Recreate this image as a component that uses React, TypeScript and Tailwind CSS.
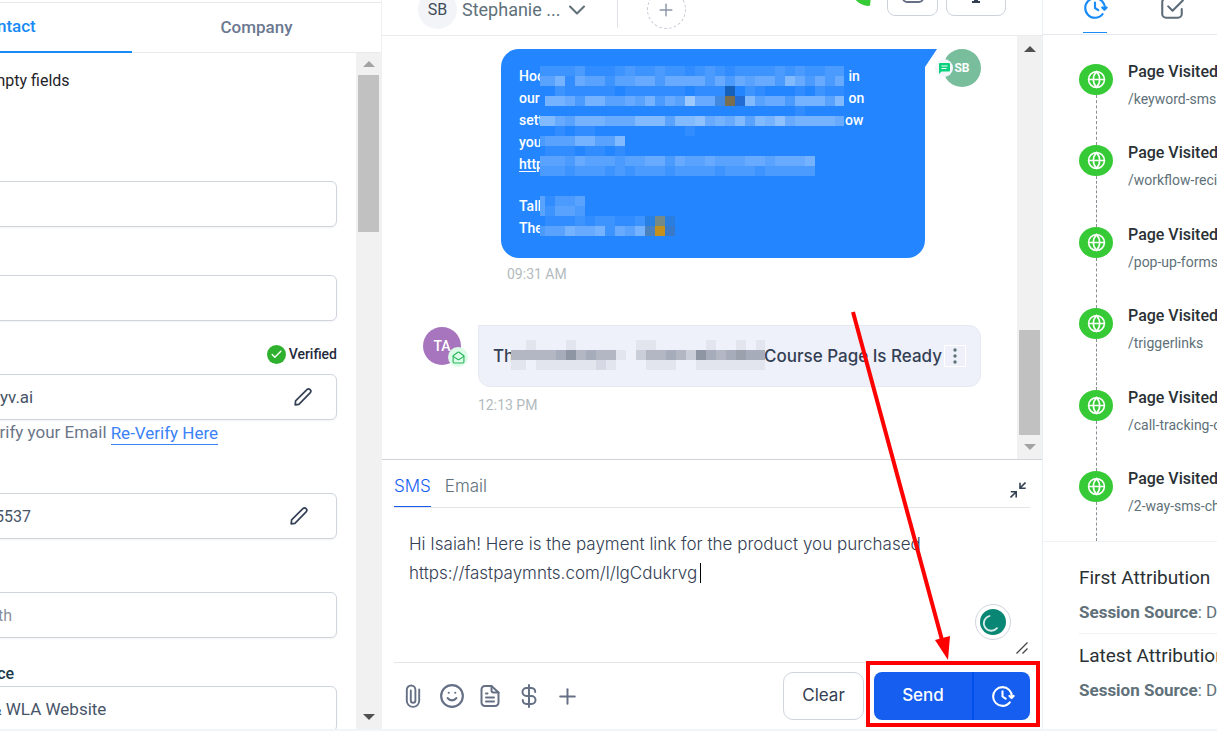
import { ReactNode } from "react";
import { Check, ChevronDown, Globe, MailOpen, Plus, Smile } from "lucide-react";

type Block = { x: number; y: number; row: string };

const TINTS: Record<string, string> = {
  A: "#1560b8",
  B: "#4088e0",
  C: "#7a6e50",
  D: "#226cd4",
  E: "#2880e4",
  F: "#748a88",
  G: "#2b7ede",
  H: "#4a82bf",
  I: "#c4901e",
  J: "#3a78c8",
};

const MESSAGE_BLOCKS: Block[] = [
  { x: 0, y: 0, row: "2222311123223221232122223232233" },
  { x: 0, y: 10, row: "4461544244553555535354553753535" },
  { x: 0, y: 20, row: "0021111101111110111A02100010211" },
  { x: 5, y: 30, row: "66536644546354955BCD7455366647" },
  { x: 0, y: 40, row: "0000000000000000000000000010000" },
  { x: 0, y: 50, row: "7754666555777477856574768566665" },
  { x: 0, y: 60, row: "00101100000000010000000" },
  { x: 0, y: 70, row: "344466447" },
  { x: 0, y: 80, row: "011101101" },
  { x: 0, y: 90, row: "4443544434455354454445545556" },
  { x: 0, y: 100, row: "3332333232333233332333233333" },
  { x: 0, y: 130, row: "41334" },
  { x: 0, y: 140, row: "42443" },
  { x: 0, y: 150, row: "01112122112EFG" },
  { x: 0, y: 160, row: "34465562546HIJ" },
];

const SUBJECT_BLOCKS: Block[] = [
  { x: 0, y: 0, row: "00100010000" },
  { x: 0, y: 10, row: "555556856551" },
  { x: 0, y: 20, row: "110111111210" },
  { x: 125, y: 0, row: "1100000100101" },
  { x: 125, y: 10, row: "3556538656766" },
  { x: 125, y: 20, row: "0111001111111" },
];

function Mosaic({ blocks, base, tone, step, className, w, h }: {
  blocks: Block[]; base: string; tone: string; step: number; className: string; w: number; h: number;
}) {
  return (
    <svg aria-hidden="true" width={w} height={h} viewBox={`0 0 ${w} ${h}`} shapeRendering="crispEdges" className={className}>
      {blocks.map((b, r) =>
        b.row.split("").map((c, i) => {
          const half = b.x === 0;
          const x = half ? (i === 0 ? 0 : 5 + (i - 1) * 10) : b.x + i * 10;
          const width = half && i === 0 ? 5 : 10;
          const tint = TINTS[c];
          return (
            <g key={`${r}-${i}`}>
              <rect x={x} y={b.y} width={width} height={10} fill={tint ?? base} />
              {!tint && <rect x={x} y={b.y} width={width} height={10} fill={tone} opacity={Number(c) * step} />}
            </g>
          );
        })
      )}
    </svg>
  );
}

function Arrow({ down, dark }: { down?: boolean; dark?: boolean }) {
  return (
    <svg width="12" height="6" viewBox="0 0 12 6" aria-hidden="true">
      <path d={down ? "M0 0h12L6 6z" : "M0 6h12L6 0z"} fill={dark ? "#505050" : "#a3a3a3"} />
    </svg>
  );
}

function Scrollbar({ atEnd, className }: { atEnd?: boolean; className: string }) {
  return (
    <div aria-hidden="true" className="flex w-[25px] shrink-0 flex-col items-center bg-[#f1f1f1]">
      <div className={atEnd ? "flex h-[22px] items-center pt-1" : "flex h-[22px] items-center"}><Arrow dark={atEnd} /></div>
      {atEnd && <div className="flex-1" />}
      <div className={className} />
      {!atEnd && <div className="flex-1" />}
      <div className="flex h-6 items-center"><Arrow down dark={!atEnd} /></div>
    </div>
  );
}

function Pencil() {
  return (
    <svg width="18" height="18" viewBox="0 0 18 18" fill="none" stroke="#344054" strokeWidth="1.7" strokeLinejoin="round" aria-hidden="true">
      <path d="M1.2 16.8l.4-4L12.9 1.7a2.2 2.2 0 0 1 3.2 3.2L4.9 16.3z" />
    </svg>
  );
}

function ClockForward({ size }: { size: number }) {
  return (
    <svg width={size} height={size} viewBox="0 0 24 24" fill="none" stroke="currentColor" strokeWidth="2" strokeLinecap="round" strokeLinejoin="round" aria-hidden="true">
      <path d="M22.7 11.5L20.7 13.5L18.7 11.5M20.95 13C20.98 12.67 21 12.34 21 12C21 7.03 16.97 3 12 3C7.03 3 3 7.03 3 12C3 16.97 7.03 21 12 21C14.83 21 17.35 19.69 19 17.65M12 7V12L15 14" />
    </svg>
  );
}

function Field({ label, children, value, placeholder, className = "text-base" }: {
  label: string; children?: ReactNode; value?: string; placeholder?: string; className?: string;
}) {
  return (
    <div className={`flex h-[46px] shrink-0 items-center rounded-md border border-[#cfd4de] bg-white shadow-xs ${className}`}>
      <input
        aria-label={label}
        defaultValue={value}
        placeholder={placeholder}
        className="h-full min-w-0 flex-1 bg-transparent text-[#475467] outline-none placeholder:text-[#8a90a0]"
      />
      {children}
    </div>
  );
}

function ContactPanel() {
  return (
    <aside className="-ml-[120px] flex w-[502px] shrink-0 flex-col border-r border-[#f0f1f3] pt-0.5">
      <div className="flex h-[51px] shrink-0 border-y border-[#e8eaee] text-[17px] font-medium">
        <button className="-mb-px w-[252px] border-b-2 border-[#188bf6] text-[#188bf6]">Contact</button>
        <button className="flex-1 text-[#6b7890]">Company</button>
      </div>
      <div className="flex min-h-0 flex-1">
        <div className="flex min-w-0 flex-1 flex-col overflow-hidden pt-4 pr-[19px] pl-6">
          <label className="flex h-6 shrink-0 items-center gap-[30px] text-base text-[#1f2329]">
            <input type="checkbox" className="size-3" />
            Hide empty fields
          </label>
          <Field label="First name" className="mt-[88px] px-4" />
          <Field label="Last name" className="mt-12 px-4" />
          <div className="mt-[21px] mb-2 flex h-6 shrink-0 items-center justify-end gap-[3px] text-sm font-medium text-[#1f2a3d]">
            <span className="flex size-[19px] items-center justify-center rounded-full bg-[#2fb12f] text-white">
              <Check size={13} strokeWidth={2.5} />
            </span>
            Verified
          </div>
          <Field label="Email" value="yv.ai" className="pr-6 pl-[95px] text-[17px]">
            <button aria-label="Edit email"><Pencil /></button>
          </Field>
          <div className="flex h-[26px] shrink-0 items-center gap-1 pl-[18px] text-[17px] whitespace-nowrap text-[#6b7688]">
            <span>Click to verify your Email</span>
            <a href="#verify" className="border-b border-[#3b82f6] leading-[22px] text-[#3b82f6]">Re-Verify Here</a>
          </div>
          <Field label="Phone" value="5537" className="mt-[47px] pr-7 pl-[90px] text-base">
            <button aria-label="Edit phone"><Pencil /></button>
          </Field>
          <Field label="Date of birth" placeholder="Date Of Birth" className="mt-[53px] px-4" />
          <div className="mt-6 flex h-6 shrink-0 items-center text-base font-medium text-[#1b3a4b]">Contact Source</div>
          <Field label="Contact source" value="& WLA Website" className="pr-4 pl-[86px] text-[17px]" />
        </div>
        <Scrollbar className="h-[157px] w-[21px] bg-[#c1c1c1]" />
      </div>
    </aside>
  );
}

function ConversationHeader() {
  return (
    <header className="-mt-[37px] flex h-[73px] shrink-0 items-end border-b border-[#e9ebee] pl-9 pr-9">
      <div className="mb-1.5 flex items-center">
        <span className="flex size-[39px] items-center justify-center rounded-full bg-[#f2f4f8] text-base text-[#3f4b58]">SB</span>
        <span className="ml-[5px] flex items-center gap-0.5 text-lg text-[#607179]">
          Stephanie ...
          <ChevronDown size={28} strokeWidth={1.8} />
        </span>
        <span className="ml-[26px] h-9 w-px bg-[#dfe2e6]" />
        <button aria-label="Add" className="ml-[29px] flex size-[39px] items-center justify-center rounded-full border border-dashed border-[#c4c9d4] text-[#8a94a8]">
          <Plus size={20} strokeWidth={1.7} />
        </button>
      </div>
      <div className="mb-[19px] ml-auto flex items-end gap-2">
        <svg width="20" height="30" viewBox="0 0 20 30" className="mr-1.5" aria-hidden="true">
          <path d="M0 10C2 14 6 18 12 19.6 14 20 16 20 17 19.5L18 10z" fill="#37ca37" />
        </svg>
        <button aria-label="Archive" className="flex h-10 w-[51px] items-end justify-center rounded-lg border border-[#cdd2dc] pb-3">
          <svg width="22" height="16" viewBox="0 0 22 16" fill="none" stroke="#667085" strokeWidth="2" aria-hidden="true">
            <rect x="1" y="-6" width="20" height="21" rx="4" />
          </svg>
        </button>
        <button aria-label="Details" className="flex h-10 w-[60px] items-end justify-center rounded-lg border border-[#cdd2dc] pb-3">
          <svg width="8" height="12" viewBox="0 0 8 12" aria-hidden="true"><path d="M2 0h4v10h2v2H0v-2h2z" fill="#344054" /></svg>
        </button>
      </div>
    </header>
  );
}

const LINES: [string, string][] = [["Hoo", " in"], ["our", " on"], ["sett", "ow"], ["you", ""]];

function Messages() {
  return (
    <div className="flex min-h-0 flex-1">
      <div className="min-w-0 flex-1 overflow-hidden pt-[13px] pr-9 pl-[41px]">
        <div className="flex justify-end gap-[18px]">
          <div className="relative h-[209px] w-[424px] rounded-[18px] rounded-tr-none bg-[#2385ff] px-[18px] pt-4 text-sm leading-[22px] font-medium text-white">
            {LINES.map(([start, end]) => (
              <p key={start} className="flex whitespace-pre">
                <span className="w-[326px]">{start}</span>
                <span>{end}</span>
              </p>
            ))}
            <p><a href="#link" className="underline underline-offset-2">http</a></p>
            <p className="mt-5">Talk</p>
            <p>The</p>
            <Mosaic blocks={MESSAGE_BLOCKS} base="#2385ff" tone="#ffffff" step={0.062} w={304} h={170} className="absolute top-[17px] left-[39px]" />
            <svg width="12" height="18" viewBox="0 0 12 18" className="absolute top-0 left-full" aria-hidden="true"><path d="M0 0h12L0 18z" fill="#2385ff" /></svg>
          </div>
          <div className="relative flex size-[38px] items-center justify-center rounded-full bg-[#78bd9c] text-xs font-bold text-white">
            SB
            <span className="absolute top-2.5 -left-2 flex size-[18px] items-center justify-center rounded-full bg-[#f4f6fa]">
              <svg width="11" height="11" viewBox="0 0 11 11" aria-hidden="true">
                <path d="M1 0h9q1 0 1 1v6.500q0 1-1 1H2.500L0 11V1q0-1 1-1z" fill="#0bd07c" />
                <path d="M2.500 3h6M2.500 5.500h5" stroke="#fff" strokeWidth="1" />
              </svg>
            </span>
          </div>
        </div>
        <p className="mt-1.5 pl-[84px] text-sm text-[#b2babd]">09:31 AM</p>
        <div className="mt-[41px] flex items-start gap-[17px]">
          <div className="relative mt-0.5 flex size-[38px] shrink-0 items-center justify-center rounded-full bg-[#a675be] text-sm font-medium text-white">
            TA
            <span className="absolute top-5 left-[25px] flex size-5 items-center justify-center rounded-full bg-[#dcfce7] text-[#27b35c]">
              <MailOpen size={13} strokeWidth={2} />
            </span>
          </div>
          <div className="min-w-0 flex-1">
            <div className="relative flex h-[62px] items-center justify-between rounded-xl rounded-tl-none border border-[#e6e9ef] bg-[#eef1fa] pr-3.5 pl-3.5 font-['Inter',sans-serif] text-[17px] leading-6 font-medium text-[#344054]">
              <span>Th</span>
              <Mosaic blocks={SUBJECT_BLOCKS} base="#eef1fa" tone="#364152" step={0.065} w={254} h={30} className="absolute top-3.5 left-8" />
              <span className="flex items-center gap-0.5 whitespace-nowrap">
                Course Page Is Ready
                <button aria-label="More actions" className="flex size-[22px] items-center justify-center border border-white">
                  <svg width="4" height="16" viewBox="0 0 4 16" fill="#607179" aria-hidden="true"><circle cx="2" cy="2" r="1.700" /><circle cx="2" cy="8" r="1.700" /><circle cx="2" cy="14" r="1.700" /></svg>
                </button>
              </span>
            </div>
            <p className="mt-2 text-sm text-[#b2babd]">12:13 PM</p>
          </div>
        </div>
      </div>
      <Scrollbar atEnd className="h-[105px] w-[21px] bg-[#c1c1c1]" />
    </div>
  );
}

function Composer() {
  return (
    <section className="flex h-[270px] shrink-0 flex-col border-t border-[#d0d3d8] pr-3 pl-3 font-['Inter',sans-serif] text-[17px]">
      <div className="flex h-12 shrink-0 items-end justify-between border-b border-[#e2e4e8]">
        <div className="flex gap-3.5 font-light">
          <button className="h-10 border-b border-[#155eef] text-[#155eef]">SMS</button>
          <button className="h-10 text-[#607179]">Email</button>
        </div>
        <button aria-label="Collapse" className="mb-[9px] pr-1">
          <svg width="16" height="16" viewBox="0 0 16 16" fill="none" stroke="#344054" strokeWidth="1.600" aria-hidden="true">
            <path d="M15.500.500L10 6M10 .800V6.200h5.700M.500 15.500L6 10M.800 9.800h5.400v5.700" />
          </svg>
        </button>
      </div>
      <div className="relative flex min-h-0 flex-1 border-b border-[#e2e4e8]">
        <textarea
          aria-label="Message"
          defaultValue={"Hi Isaiah! Here is the payment link for the product you purchased\nhttps://fastpaymnts.com/l/lgCdukrvg"}
          className="w-full flex-1 resize-none bg-transparent px-[15px] pt-[22px] leading-[29px] font-light text-[#344054] outline-none"
        />
        <span className="absolute top-[55px] left-[306px] h-5 w-px bg-black" />
        <span className="absolute right-[19px] bottom-[22px] flex size-9 items-center justify-center rounded-full border border-[#cfd4de] bg-white">
          <svg width="26" height="26" viewBox="0 0 26 26" fill="none" aria-hidden="true">
            <circle cx="13" cy="13" r="13" fill="#0a8674" />
            <path d="M9.500 7a7.500 7.500 0 1 0 7.500 12.200" stroke="#d5eeea" strokeWidth="1.800" strokeLinecap="round" />
          </svg>
        </span>
        <svg width="12" height="12" viewBox="0 0 12 12" className="absolute right-0.5 bottom-2" stroke="#444" strokeWidth="1.300" aria-hidden="true">
          <path d="M.5 11.500l11-11M6.500 11.500l5-5" />
        </svg>
      </div>
      <div className="flex h-[66px] shrink-0 items-center justify-between">
        <div className="flex items-center pl-2 text-[#667085]">
          <button aria-label="Attach file" className="flex w-[22px] justify-center">
            <svg width="16" height="24" viewBox="0 0 16 24" fill="none" stroke="currentColor" strokeWidth="1.900" strokeLinecap="round" aria-hidden="true">
              <path d="M14.200 5.500v11.200a6.200 6.200 0 0 1-12.400 0V5.800a4.300 4.300 0 0 1 8.600 0v10.700a2.300 2.300 0 0 1-4.600 0V6.500" />
            </svg>
          </button>
          <button aria-label="Emoji" className="ml-[15px]"><Smile size={26} strokeWidth={2} /></button>
          <button aria-label="Template" className="ml-3.5">
            <svg width="22" height="24" viewBox="0 0 22 24" fill="none" stroke="currentColor" strokeWidth="2" strokeLinecap="round" strokeLinejoin="round" aria-hidden="true">
              <path d="M12.500 2H6a3.500 3.500 0 0 0-3.500 3.500v13A3.500 3.500 0 0 0 6 22h10a3.500 3.500 0 0 0 3.500-3.500V8.500z" />
              <path d="M12.500 2v4.500a2 2 0 0 0 2 2h5M7 9.500h1.500M7 13.500h8M7 17.500h8" />
            </svg>
          </button>
          <button aria-label="Request payment" className="ml-[17px]">
            <svg width="22" height="24" viewBox="0 0 22 24" fill="none" stroke="currentColor" strokeWidth="2" strokeLinecap="round" aria-hidden="true">
              <path d="M11 1v22M17.200 8A4 4 0 0 0 13.500 4h-5a3.900 3.900 0 0 0 0 8h5a3.900 3.900 0 0 1 0 8h-5A4 4 0 0 1 4.800 16" />
            </svg>
          </button>
          <button aria-label="More" className="ml-[15px]"><Plus size={25} strokeWidth={1.900} /></button>
        </div>
        <div className="flex gap-2.5">
          <button className="h-12 w-[81px] rounded-[10px] border border-[#d0d5dd] text-[#344054]">Clear</button>
          <div className="relative flex h-12 w-[156px] rounded-lg bg-[#155eef] text-white">
            <button className="flex-1 border-r-2 border-[#004eeb] font-medium">Send</button>
            <button aria-label="Schedule" className="flex w-14 items-center justify-center"><ClockForward size={25} /></button>
            <span className="pointer-events-none absolute -top-[11px] -right-2.5 -bottom-[7px] -left-2 border-4 border-[#fe0000]" />
            <svg width="110" height="360" viewBox="0 0 110 360" className="pointer-events-none absolute bottom-[60px] -left-[29px]" aria-hidden="true">
              <path d="M8 12L97 340" stroke="#fe0000" strokeWidth="4" />
              <path d="M90 340L105 336 103 360z" fill="#fe0000" />
            </svg>
          </div>
        </div>
      </div>
    </section>
  );
}

const VISITS = ["/keyword-sms", "/workflow-recipes", "/pop-up-forms", "/triggerlinks", "/call-tracking-c", "/2-way-sms-chat"];

function ActivityPanel() {
  return (
    <aside className="flex w-[175px] shrink-0 flex-col overflow-hidden border-l border-[#eaf1f5] whitespace-nowrap">
      <div className="flex h-[35px] shrink-0 items-start border-b border-[#e6eaee] pl-10">
        <button aria-label="Activity" className="flex h-[33px] w-6 items-start justify-center border-b border-[#188bf6] text-[#188bf6]">
          <span className="-mt-[5px]"><ClockForward size={26} /></span>
        </button>
        <button aria-label="Tasks" className="-mt-[5px] ml-[52px] text-[#5b6b77]">
          <svg width="26" height="26" viewBox="0 0 24 24" fill="none" stroke="currentColor" strokeWidth="1.900" strokeLinecap="round" strokeLinejoin="round" aria-hidden="true">
            <path d="M14 3H6.500A3.500 3.500 0 0 0 3 6.500v11A3.500 3.500 0 0 0 6.500 21h11a3.500 3.500 0 0 0 3.500-3.500V13M8.500 10.500l4 4L22 5" />
          </svg>
        </button>
      </div>
      <div className="h-[507px] shrink-0 border-b border-[#f0f3f5] pt-[29px] pl-9">
        <ul className="grid h-[477px] grid-rows-[repeat(5,1fr)_70px]">
          {VISITS.map((path) => (
            <li key={path} className="flex min-h-0 gap-[15px]">
              <div className="flex w-[34px] shrink-0 flex-col items-center">
                <span className="flex h-[31px] w-[34px] shrink-0 items-center justify-center rounded-[50%] bg-[#37ca37] text-white">
                  <Globe size={19} strokeWidth={2} />
                </span>
                <span className="flex-1 border-l border-dashed border-[#8a8f94]" />
              </div>
              <div className="-mt-1">
                <p className="text-base font-medium text-[#2a3135]">Page Visited</p>
                <p className="mt-[5px] text-sm text-[#607179]">{path}</p>
              </div>
            </li>
          ))}
        </ul>
      </div>
      <div className="min-h-0 flex-1 overflow-hidden pt-[22px] pl-9">
        <h3 className="text-[19px] leading-7 text-[#2a3135]">First Attribution</h3>
        <p className="mt-2 text-[17px] leading-6 text-[#607179]"><b>Session Source</b>: Direct</p>
        <div className="mt-[9px] border-t border-[#f0f3f5] pt-2">
          <h3 className="text-[19px] leading-7 text-[#2a3135]">Latest Attribution</h3>
          <p className="mt-2 text-[17px] leading-6 text-[#607179]"><b>Session Source</b>: Direct</p>
        </div>
      </div>
    </aside>
  );
}

export default function App() {
  return (
    <div className="flex h-screen flex-col overflow-hidden bg-white font-['Roboto',sans-serif]">
      <div className="flex min-h-0 flex-1">
        <ContactPanel />
        <main className="flex min-w-0 flex-1 flex-col">
          <ConversationHeader />
          <Messages />
          <Composer />
        </main>
        <ActivityPanel />
      </div>
      <div className="h-0.5 shrink-0 bg-[#f1f5f9]" />
    </div>
  );
}
